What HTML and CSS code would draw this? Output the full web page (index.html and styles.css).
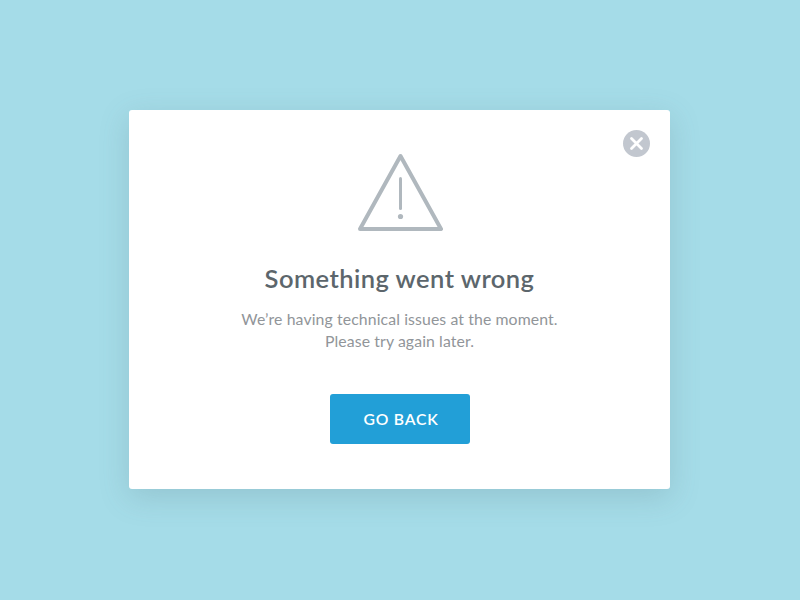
FILE: index.html
```html
<!DOCTYPE html>
<html lang="en">
<head>
<meta charset="utf-8">
<title>Something went wrong</title>
<link rel="stylesheet" href="styles.css">
</head>
<body>
<main class="dialog" role="alertdialog" aria-labelledby="title" aria-describedby="message">
  <button class="close" aria-label="Close">
    <svg width="27" height="27" viewBox="0 0 27 27">
      <circle cx="13.5" cy="13.5" r="13.5" fill="#c2c7cf"/>
      <path d="M8.5 8.500l10 10M18.500 8.500l-10 10" stroke="#fff" stroke-width="2.800" stroke-linecap="round"/>
    </svg>
  </button>
  <svg class="warning" width="85" height="78" viewBox="0 0 85 78" fill="none" stroke="#b0b8be" stroke-linejoin="round" stroke-linecap="round">
    <path d="M42.500 3L83 76H2z" stroke-width="4"/>
    <path d="M42.500 25.500V55.500" stroke-width="3"/>
    <circle cx="42.500" cy="63.500" r="2.600" fill="#b0b8be" stroke="none"/>
  </svg>
  <h1 class="title" id="title">Something went wrong</h1>
  <p class="message" id="message">We’re having technical issues at the moment.<br>Please try again later.</p>
  <button class="action">GO BACK</button>
</main>
</body>
</html>
```
FILE: styles.css
```css
* { box-sizing: border-box; }

body {
  margin: 0;
  height: 600px;
  display: flex;
  justify-content: center;
  padding: 110px 1px 0 0;
  background: #a5dce8;
  font-family: Lato, "Open Sans", sans-serif;
  overflow: hidden;
}

.dialog {
  position: relative;
  width: 541px;
  height: 379px;
  display: flex;
  flex-direction: column;
  align-items: center;
  padding-top: 43px;
  background: #fff;
  border-radius: 3px;
  box-shadow: 0 8px 30px rgba(80, 110, 120, 0.21);
}

.close {
  position: absolute;
  top: 20px;
  right: 20px;
  padding: 0;
  border: 0;
  background: none;
}

.close svg,
.warning { display: block; }

.warning { margin-left: 2px; }

.title {
  margin: 31px 0 0;
  color: #5c666c;
  font-size: 25.500px;
  font-weight: 600;
  line-height: 32px;
  letter-spacing: 0.450px;
  white-space: nowrap;
}

.message {
  margin: 14px 0 0;
  color: #919599;
  font-size: 15.800px;
  line-height: 22px;
  letter-spacing: 0.110px;
  text-align: center;
  white-space: nowrap;
}

.action {
  width: 140px;
  height: 50px;
  margin: 42px 0 0 1px;
  padding: 0 0 0 2px;
  border: 0;
  border-radius: 3px;
  background: #229fd7;
  color: #fff;
  font: 600 15.700px Lato, "Open Sans", sans-serif;
  letter-spacing: 0.800px;
}
```
